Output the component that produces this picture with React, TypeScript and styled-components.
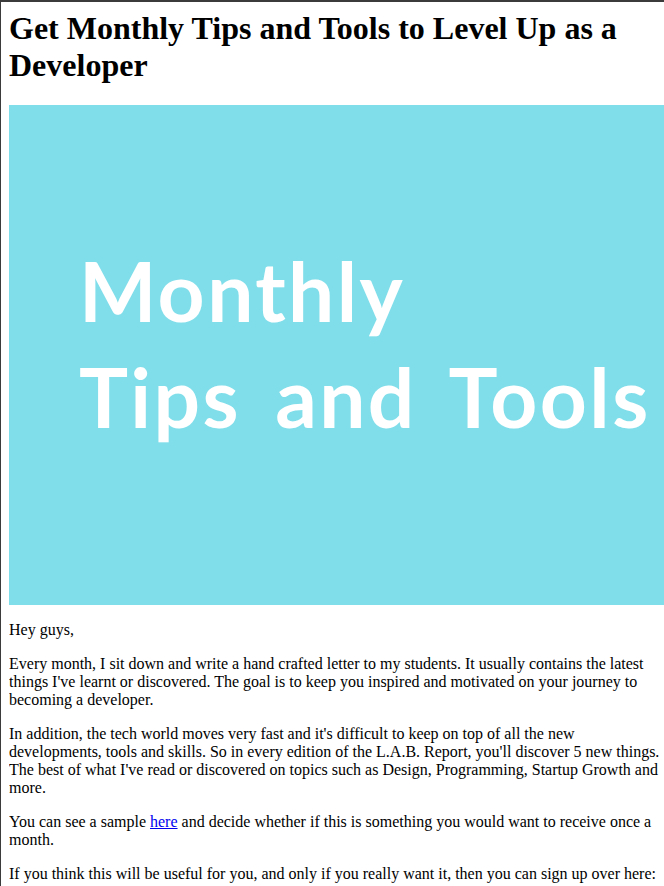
import styled, { createGlobalStyle } from "styled-components";

const GlobalStyle = createGlobalStyle`
  html {
    border-top: 2px solid #3b3b3b;
    border-left: 1px solid #3b3b3b;
  }
  body {
    margin: 8px 0 8px 8px;
    font-family: "Liberation Serif", "Times New Roman", serif;
    font-size: 16px;
    color: #000;
    background: #fff;
  }
`;

const Title = styled.h1`
  font-size: 32px;
  font-weight: 700;
  margin: 0 0 21.44px 0;
`;

const Banner = styled.div`
  height: 500px;
  background-color: #80deea;
  display: flex;
  flex-direction: column;
  padding: 132px 0 0 70px;
  box-sizing: border-box;
  overflow: hidden;
`;

const BannerLine = styled.div`
  font-family: Lato, "Open Sans", sans-serif;
  font-weight: 700;
  font-size: 82px;
  line-height: 106px;
  letter-spacing: 2.4px;
  word-spacing: 12px;
  color: #fff;
  white-space: nowrap;
`;

const Paragraph = styled.p`
  margin: 16px 0;
  line-height: normal;
`;

const Link = styled.a`
  color: #0000ee;
  text-decoration: underline;
`;

const App = () => {
  return (
    <>
      <GlobalStyle />
      <Title>Get Monthly Tips and Tools to Level Up as a Developer</Title>
      <Banner>
        <BannerLine>Monthly</BannerLine>
        <BannerLine>Tips and Tools</BannerLine>
      </Banner>
      <Paragraph>Hey guys,</Paragraph>
      <Paragraph>
        Every month, I sit down and write a hand crafted letter to my students.
        It usually contains the latest things I've learnt or discovered. The
        goal is to keep you inspired and motivated on your journey to becoming
        a developer.
      </Paragraph>
      <Paragraph>
        In addition, the tech world moves very fast and it's difficult to keep
        on top of all the new developments, tools and skills. So in every
        edition of the L.A.B. Report, you'll discover 5 new things. The best of
        what I've read or discovered on topics such as Design, Programming,
        Startup Growth and more.
      </Paragraph>
      <Paragraph>
        You can see a sample <Link href="#">here</Link> and decide whether if
        this is something you would want to receive once a month.
      </Paragraph>
      <Paragraph>
        If you think this will be useful for you, and only if you really want
        it, then you can sign up over here:
      </Paragraph>
    </>
  );
};

export default App;
